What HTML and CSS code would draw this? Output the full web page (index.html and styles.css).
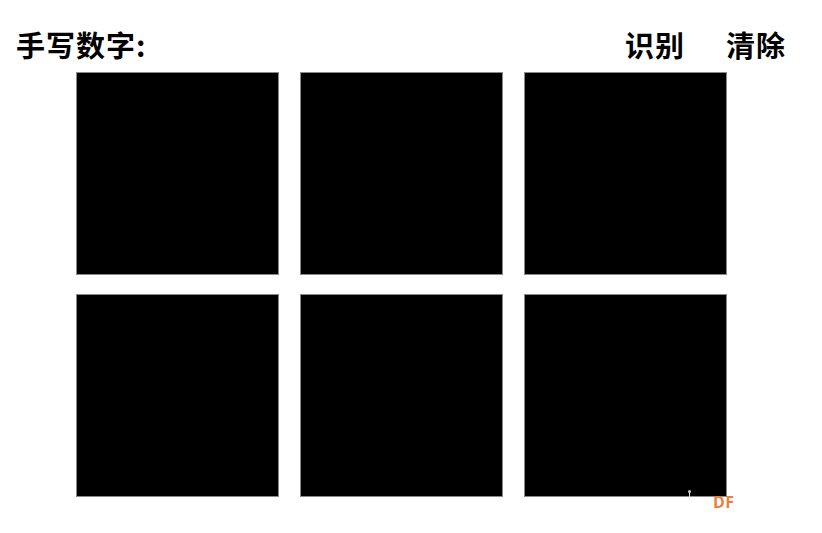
FILE: index.html
```html
<!DOCTYPE html>
<html lang="zh">
<head>
<meta charset="utf-8">
<link rel="stylesheet" href="styles.css">
</head>
<body>
<div class="header">
  <div class="title">手写数字:</div>
  <div class="actions">
    <span class="btn">识别</span>
    <span class="btn">清除</span>
  </div>
</div>
<div class="grid">
  <div class="pad"></div>
  <div class="pad"></div>
  <div class="pad"></div>
  <div class="pad"></div>
  <div class="pad"></div>
  <div class="pad last"><span class="tick"></span></div>
</div>
<div class="mark">DF</div>
</body>
</html>
```
FILE: styles.css
```css
html, body {
  margin: 0;
  padding: 0;
  background: #fff;
  width: 822px;
  height: 533px;
  overflow: hidden;
  position: relative;
  font-family: "Noto Sans CJK SC", "Noto Sans", sans-serif;
}
.header {
  display: flex;
  justify-content: space-between;
  align-items: flex-start;
  padding: 30px 36px 0 16px;
  height: 29px;
}
.title, .btn {
  font-size: 29px;
  line-height: 29px;
  font-weight: bold;
  color: #000;
  letter-spacing: 1px;
}
.actions {
  display: flex;
  gap: 41px;
}
.grid {
  display: grid;
  grid-template-columns: repeat(3, 203px);
  grid-auto-rows: 203px;
  column-gap: 21px;
  row-gap: 19px;
  margin: 13px 0 0 76px;
}
.pad {
  background: #000;
  border: 1px solid #8a8a8a;
  box-sizing: border-box;
  position: relative;
}
.tick {
  position: absolute;
  left: 164px;
  bottom: -1px;
  width: 1px;
  height: 6px;
  background: #ddd;
}
.tick::before {
  content: "";
  position: absolute;
  left: -1px;
  top: -1px;
  width: 3px;
  height: 3px;
  border-radius: 50%;
  background: #ccc;
}
.mark {
  position: absolute;
  left: 713px;
  top: 493px;
  font-family: "Open Sans", "DejaVu Sans", sans-serif;
  font-weight: bold;
  font-size: 16px;
  line-height: 19px;
  color: #ed7d3a;
  letter-spacing: 0.5px;
}
```
